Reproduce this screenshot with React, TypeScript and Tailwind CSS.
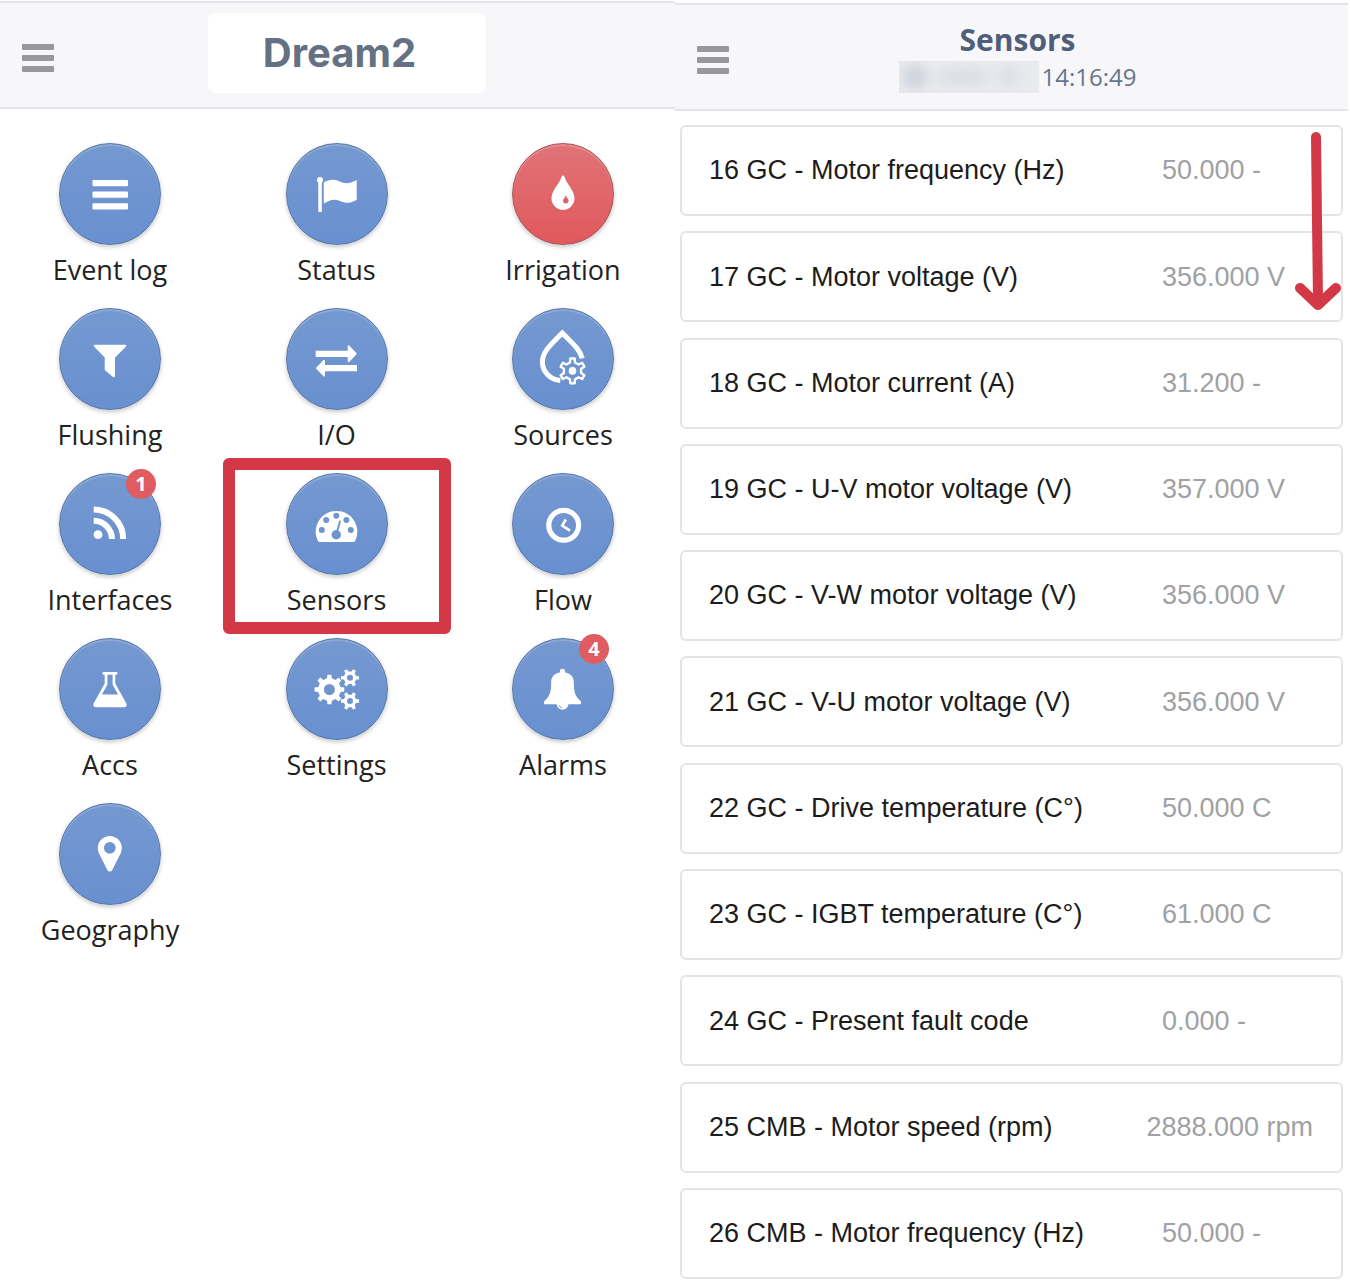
import type { ReactNode } from 'react'
import clsx from 'clsx'

interface Tile {
  label: string
  icon: ReactNode
  badge?: number
  alert?: boolean
  highlighted?: boolean
}

interface Sensor {
  name: string
  value: string
}

// Closed outline of a cog wheel around (cx, cy), first tooth at `start` radians
function gearPath(cx: number, cy: number, outer: number, inner: number, teeth: number, start = -Math.PI / 2) {
  const step = (Math.PI * 2) / teeth
  const points: string[] = []
  for (let i = 0; i < teeth; i++) {
    const mid = i * step + start
    const corners = [
      [inner, -0.27],
      [outer, -0.17],
      [outer, 0.17],
      [inner, 0.27],
    ]
    corners.forEach(([r, offset]) => {
      const angle = mid + offset * step
      points.push(`${(cx + r * Math.cos(angle)).toFixed(2)} ${(cy + r * Math.sin(angle)).toFixed(2)}`)
    })
  }
  return `M${points.join('L')}Z`
}

function circlePath(cx: number, cy: number, r: number) {
  return `M${cx - r} ${cy}a${r} ${r} 0 1 0 ${r * 2} 0a${r} ${r} 0 1 0 ${-r * 2} 0Z`
}

const icons = {
  log: (
    <>
      <rect x="33.5" y="37" width="35.5" height="6.3" rx="1" />
      <rect x="33.5" y="48.5" width="35.5" height="6.3" rx="1" />
      <rect x="33.5" y="60.2" width="35.5" height="6.3" rx="1" />
    </>
  ),
  flag: (
    <>
      <circle cx="34" cy="37" r="3" />
      <rect x="32.3" y="37" width="3.5" height="32" rx="0.6" />
      <path d="M37.8 39.4C43 36.6 48 36 53 38.2C59 41 63 41 70.7 37V56.7C64 60.6 60 60.6 54 58C48 55.6 44 57 37.8 60.6Z" />
    </>
  ),
  drop: (
    <path
      fillRule="evenodd"
      d="M51 32.5C52 32.5 52.5 33.5 53 35C54.5 40.5 62.5 47.5 62.5 55.3A11.5 11.5 0 0 1 39.5 55.3C39.5 47.5 47.5 40.5 49 35C49.5 33.5 50 32.5 51 32.5ZM53.8 52.3C53.2 54.5 51 56 51 57.8A2.8 2.8 0 0 0 56.6 57.8C56.6 56 54.4 54.5 53.8 52.3Z"
    />
  ),
  filter: <path d="M35.5 36.7H66.5Q68 37.3 67 38.6L56 49.5V68Q55.5 69.8 54 69L46.3 62.5Q45.7 62 45.7 61V49.5L35 38.6Q34 37.3 35.5 36.7Z" />,
  exchange: (
    <>
      <path d="M29.7 42.7H61.7V38Q62.2 36.8 63.2 37.6L71 45.8L63.2 53.9Q62.2 54.7 61.7 53.4V49H29.7Z" />
      <path d="M71 57H39V52.4Q38.5 51.2 37.5 52L29.7 60.2L37.5 68.3Q38.5 69.1 39 67.9V63.3H71Z" />
    </>
  ),
  sources: (
    <>
      <path
        d="M48.3 72.6C38 71.5 30.4 63.6 30.4 54C30.4 43.5 39 36.5 50.3 25C59.5 34.5 68 41 70.2 50.4"
        fill="none"
        stroke="currentColor"
        strokeWidth="5"
      />
      <path d={gearPath(60.5, 62.9, 12.6, 8.8, 6)} fill="none" stroke="currentColor" strokeWidth="2.4" strokeLinejoin="round" />
      <circle cx="60.5" cy="62.9" r="3.8" />
    </>
  ),
  feed: (
    <>
      <circle cx="39" cy="61.7" r="4.4" />
      <g fill="none" stroke="currentColor" strokeWidth="6" strokeLinejoin="round">
        <path d="M34.7 47.8A18.2 18.2 0 0 1 52.9 66" />
        <path d="M34.7 36.5A29.5 29.5 0 0 1 64.2 66" />
      </g>
    </>
  ),
  gauge: (
    <path
      fillRule="evenodd"
      d={
        'M33.5 69Q32.3 69 31.8 67.8A20.8 20.8 0 1 1 69.2 67.8Q68.7 69 67.5 69Z' +
        circlePath(50.3, 42.7, 3) +
        circlePath(40.2, 47, 3) +
        circlePath(60.4, 47, 3) +
        circlePath(35.8, 57, 3) +
        circlePath(64.8, 57, 3) +
        'M53.2 47.6L55 48.1L52.4 57.5A4.7 4.7 0 1 1 50.6 57Z'
      }
    />
  ),
  clock: (
    <g fill="none" stroke="currentColor">
      <circle cx="51.7" cy="52.3" r="14.9" strokeWidth="5.2" />
      <path d="M53.8 46.5L50.2 52.6L58 57.6" strokeWidth="2.6" />
    </g>
  ),
  flask: (
    <path
      fillRule="evenodd"
      d="M44.6 34H57.4Q58.5 34 58.5 35.4T57.4 36.8H56.3V45.5L67.4 65.6Q68.5 69.2 64.8 69.2H37.2Q33.5 69.2 34.6 65.6L45.7 45.5V36.8H44.6Q43.5 36.8 43.5 35.4T44.6 34ZM48.4 36.8V46.5L43 56.4H59L53.6 46.5V36.8Z"
    />
  ),
  cogs: (
    <g fillRule="evenodd">
      <path d={gearPath(43.4, 51.5, 15, 11.4, 8) + circlePath(43.4, 51.5, 5.5)} />
      <path d={gearPath(64, 39.8, 9.2, 6.4, 6, 0) + circlePath(64, 39.8, 3)} />
      <path d={gearPath(64, 63, 9.2, 6.4, 6, 0) + circlePath(64, 63, 3)} />
    </g>
  ),
  bell: (
    <>
      <circle cx="50.5" cy="33.4" r="2.6" />
      <path d="M50.5 34.2C58 34.2 61.8 38.5 61.8 44C61.8 55 63.5 58.5 68.8 63.2Q70 66.3 67.4 66.3H33.6Q31 66.3 32.2 63.2C37.5 58.5 39.2 55 39.2 44C39.2 38.5 43 34.2 50.5 34.2Z" />
      <path d="M44.6 66H56.4A5.9 5.7 0 0 1 44.6 66Z" />
      <path d="M46.8 67.2Q47.6 69.4 50 69.8" fill="none" stroke="#6f94cf" strokeWidth="0.9" />
    </>
  ),
  pin: (
    <path
      fillRule="evenodd"
      d={'M38.8 45A12 12 0 0 1 62.8 45Q62.8 48 61.8 50L53.3 67Q52.5 68.6 50.8 68.6T48.3 67L39.8 50Q38.8 48 38.8 45Z' + circlePath(50.8, 44.8, 5.9)}
    />
  ),
}

const tiles: Tile[] = [
  { label: 'Event log', icon: icons.log },
  { label: 'Status', icon: icons.flag },
  { label: 'Irrigation', icon: icons.drop, alert: true },
  { label: 'Flushing', icon: icons.filter },
  { label: 'I/O', icon: icons.exchange },
  { label: 'Sources', icon: icons.sources },
  { label: 'Interfaces', icon: icons.feed, badge: 1 },
  { label: 'Sensors', icon: icons.gauge, highlighted: true },
  { label: 'Flow', icon: icons.clock },
  { label: 'Accs', icon: icons.flask },
  { label: 'Settings', icon: icons.cogs },
  { label: 'Alarms', icon: icons.bell, badge: 4 },
  { label: 'Geography', icon: icons.pin },
]

const sensors: Sensor[] = [
  { name: '16 GC - Motor frequency (Hz)', value: '50.000 -' },
  { name: '17 GC - Motor voltage (V)', value: '356.000 V' },
  { name: '18 GC - Motor current (A)', value: '31.200 -' },
  { name: '19 GC - U-V motor voltage (V)', value: '357.000 V' },
  { name: '20 GC - V-W motor voltage (V)', value: '356.000 V' },
  { name: '21 GC - V-U motor voltage (V)', value: '356.000 V' },
  { name: '22 GC - Drive temperature (C°)', value: '50.000 C' },
  { name: '23 GC - IGBT temperature (C°)', value: '61.000 C' },
  { name: '24 GC - Present fault code', value: '0.000 -' },
  { name: '25 CMB - Motor speed (rpm)', value: '2888.000 rpm' },
  { name: '26 CMB - Motor frequency (Hz)', value: '50.000 -' },
]

function MenuButton() {
  return (
    <button type="button" aria-label="Menu" className="mt-[5px] flex w-8 flex-col gap-[5px]">
      <span className="h-[6px] w-full rounded-[1px] bg-[#97989b]" />
      <span className="h-[6px] w-full rounded-[1px] bg-[#97989b]" />
      <span className="h-[6px] w-full rounded-[1px] bg-[#97989b]" />
    </button>
  )
}

function MenuTile({ label, icon, badge, alert, highlighted }: Tile) {
  return (
    <button type="button" className="relative flex flex-col items-center gap-[7px]">
      <span
        className={clsx(
          'relative size-[102px] rounded-full border text-white shadow-[0_2px_4px_rgba(0,0,0,0.22),inset_0_2px_1px_rgba(255,255,255,0.18)]',
          alert
            ? 'border-[#a8545c] bg-linear-to-b from-[#e07377] to-[#e0585b]'
            : 'border-[#5676a6] bg-linear-to-b from-[#7598d0] to-[#6890d0]',
        )}
      >
        <svg viewBox="1 1 100 100" className="size-full" fill="currentColor" aria-hidden="true">
          {icon}
        </svg>
        {badge && (
          <span className="absolute -top-[5px] right-1 flex size-[30px] items-center justify-center rounded-full bg-[#df5c60] text-xl font-bold">
            {badge}
          </span>
        )}
      </span>
      <span className="text-[27px] leading-9 text-[#222]">{label}</span>
      {highlighted && (
        <span className="pointer-events-none absolute -inset-x-11 -top-[15px] -bottom-4 rounded-md border-12 border-[#d33846]" />
      )}
    </button>
  )
}

// Site name, obscured
function HiddenName() {
  return (
    <span className="flex h-8 w-[140px] items-center gap-3 overflow-hidden bg-[#e9eaee] pl-1">
      <span className="size-6 rounded-full bg-[#ced2da] blur-[6px]" />
      <span className="h-4 w-12 rounded-full bg-[#dcdee4] blur-[6px]" />
      <span className="h-5 w-5 rounded-full bg-[#dcdee4] blur-[6px]" />
    </span>
  )
}

function ScrollArrow() {
  return (
    <svg
      viewBox="0 0 48 184"
      className="pointer-events-none absolute top-[17px] right-[8px] h-[184px] w-12"
      fill="none"
      stroke="#d33846"
      strokeWidth="10"
      strokeLinecap="round"
      strokeLinejoin="round"
      aria-hidden="true"
    >
      <path d="M22 9L24 173" />
      <path d="M6 160L24 177L42 160" />
    </svg>
  )
}

export default function App() {
  return (
    <div className="grid min-h-screen grid-cols-2 bg-white font-['Open_Sans',sans-serif]">
      {/* Main menu */}
      <section>
        <header className="mt-px grid h-[108px] grid-cols-[32px_1fr_32px] items-center border-y-2 border-[#e3e4e9] bg-[#f7f7fa] px-[22px]">
          <MenuButton />
          <div className="mb-1 ml-[18px] flex h-20 w-[278px] justify-center justify-self-center rounded-lg bg-white pr-[14px]">
            <h1 className="font-['Inter',sans-serif] text-[40px] leading-[80px] font-bold text-[#647182]">Dream2</h1>
          </div>
        </header>
        <nav className="grid grid-cols-[repeat(3,140px)] justify-between gap-y-5 pt-[34px] pr-[42px] pl-10">
          {tiles.map((tile) => (
            <MenuTile key={tile.label} {...tile} />
          ))}
        </nav>
      </section>

      {/* Sensor readings */}
      <section className="flex flex-col">
        <header className="mt-[3px] mr-[2px] grid h-[108px] grid-cols-[32px_1fr_20px] items-center border-y-2 border-[#e3e4e9] bg-[#f7f7fa] px-[22px]">
          <MenuButton />
          <div className="flex flex-col items-center pb-[3px]">
            <h2 className="text-[30px] leading-[42px] font-bold text-[#4f5f7b]">Sensors</h2>
            <div className="flex items-center gap-[3px]">
              <HiddenName />
              <time className="text-[24px] leading-8 text-[#66758a]">14:16:49</time>
            </div>
          </div>
        </header>
        <div className="relative flex flex-1 flex-col pt-[14px] pr-[7px] pb-[6px] pl-[5px] font-['Liberation_Sans',Arial,sans-serif]">
          <dl className="flex flex-1 flex-col justify-between gap-3">
            {sensors.map(({ name, value }) => (
              <div
                key={name}
                className="flex h-[91px] items-center justify-between rounded-md border-2 border-[#e4e4e6] pr-7 pl-[27px] text-[27px] whitespace-nowrap"
              >
                <dt className="text-[#1c1c1c]">{name}</dt>
                <dd className="min-w-[151px] text-[#a0a1a4]">{value}</dd>
              </div>
            ))}
          </dl>
          <ScrollArrow />
        </div>
      </section>
    </div>
  )
}
